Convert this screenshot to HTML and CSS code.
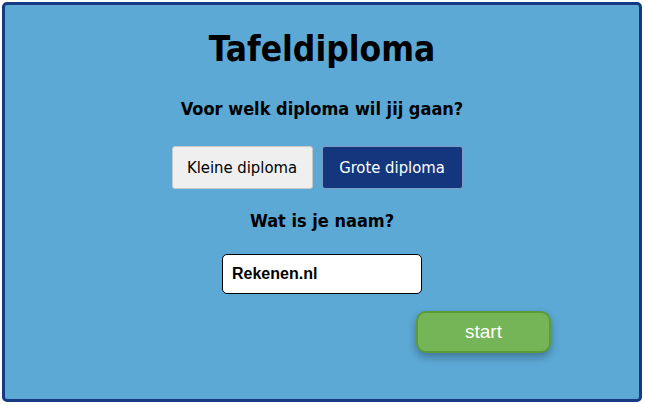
FILE: index.html
```html
<!DOCTYPE html>
<html lang="nl">
<head>
<meta charset="utf-8">
<title>Tafeldiploma</title>
<link rel="stylesheet" href="styles.css">
</head>
<body>
<main class="frame">
  <h1 class="title">Tafeldiploma</h1>
  <p class="question q1">Voor welk diploma wil jij gaan?</p>
  <div class="choices">
    <button class="choice">Kleine diploma</button>
    <button class="choice active">Grote diploma</button>
  </div>
  <p class="question q2">Wat is je naam?</p>
  <div class="name-row">
    <input class="name" type="text" value="Rekenen.nl">
  </div>
  <div class="start-row">
    <button class="start">start</button>
  </div>
</main>
</body>
</html>
```
FILE: styles.css
```css
html, body {
  margin: 0;
  padding: 0;
  background: #ffffff;
}
body {
  padding: 2px;
}
.frame {
  box-sizing: border-box;
  width: 640px;
  height: 400px;
  background: #5ca9d6;
  border: 3px solid #163b84;
  border-radius: 5px;
  display: flex;
  flex-direction: column;
  align-items: center;
  font-family: "DejaVu Sans Condensed", "DejaVu Sans", sans-serif;
  color: #000;
}
.title {
  margin: 22px 0 0;
  font-size: 35px;
  line-height: 44px;
  font-weight: bold;
  letter-spacing: 0;
}
.question {
  margin: 0;
  font-size: 18px;
  line-height: 24px;
  font-weight: bold;
}
.q1 { margin-top: 26px; }
.choices {
  display: flex;
  gap: 9px;
  margin-top: 25px;
  padding-right: 10px;
}
.choice {
  box-sizing: border-box;
  width: 141px;
  height: 43px;
  font-family: "DejaVu Sans Condensed", "DejaVu Sans", sans-serif;
  font-size: 16.5px;
  border: 1px solid #c9c9c9;
  border-radius: 3px;
  background: #efefef;
  color: #000;
  padding: 0;
}
.choice.active {
  background: #14367c;
  color: #fff;
  border-color: #7f9cc4;
}
.q2 { margin-top: 20px; }
.name-row {
  margin-top: 21px;
}
.name {
  box-sizing: border-box;
  width: 200px;
  height: 40px;
  border: 1px solid #000;
  border-radius: 5px;
  background: #fff;
  padding: 0 9px;
  font-family: "Liberation Sans", Arial, sans-serif;
  font-weight: bold;
  font-size: 16px;
  color: #000;
}
.start-row {
  align-self: stretch;
  display: flex;
  justify-content: flex-end;
  padding-right: 88px;
  margin-top: 17px;
}
.start {
  box-sizing: border-box;
  width: 135px;
  height: 42px;
  background: #75b557;
  border: 2px solid #5a9c38;
  border-radius: 10px;
  color: #fff;
  font-family: "Liberation Sans", Arial, sans-serif;
  font-size: 19px;
  box-shadow: 0 4px 8px rgba(0, 0, 0, 0.3);
}
```
